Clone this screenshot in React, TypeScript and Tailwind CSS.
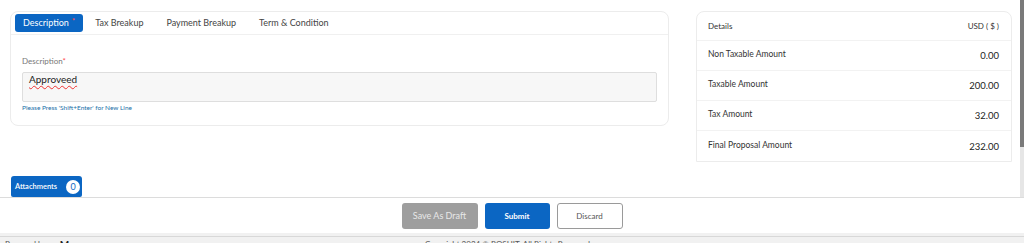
import { useState } from "react";

const tabs = ["Description", "Tax Breakup", "Payment Breakup", "Term & Condition"];

const rows = [
  { label: "Non Taxable Amount", value: "0.00" },
  { label: "Taxable Amount", value: "200.00" },
  { label: "Tax Amount", value: "32.00" },
  { label: "Final Proposal Amount", value: "232.00" },
];

function App() {
  const [active, setActive] = useState(0);
  const [desc, setDesc] = useState("Approveed");

  return (
    <div className="w-[1024px] h-[243px] overflow-hidden bg-white flex flex-col font-['Lato',sans-serif] text-[#333]">
      {/* Scrolling content */}
      <div className="flex h-[197px] shrink-0">
        <div className="flex-1 flex flex-col pl-[10px] pt-[11px]">
          <div className="flex gap-[27px]">
            {/* Tabs card */}
            <div className="w-[659px] h-[115px] border border-[#ececec] rounded-[8px] flex flex-col">
              <div className="h-[23px] border-b border-[#f0f0f0] flex items-center pl-[4px] gap-[1px]">
                {tabs.map((t, i) => (
                  <button
                    key={t}
                    onClick={() => setActive(i)}
                    className={
                      i === active
                        ? "h-[18px] px-[8px] rounded-[3px] bg-[#0b66c3] text-white text-[9px] flex items-center"
                        : "h-[18px] px-[11px] text-[9px] text-[#444] flex items-center"
                    }
                  >
                    {t}
                    {i === 0 && <span className="text-[#ff4d4d] text-[8px] ml-[3px] -mt-[4px]">*</span>}
                  </button>
                ))}
              </div>
              <div className="px-[11px] pt-[21px]">
                <div className="text-[8px] text-[#777] leading-[10px]">
                  Description<span className="text-[#ff4d4d]">*</span>
                </div>
                <textarea
                  value={desc}
                  onChange={(e) => setDesc(e.target.value)}
                  className="mt-[6px] w-[635px] h-[30px] block resize-none bg-[#f7f7f7] border border-[#dedede] rounded-[2px] px-[6px] pt-0 text-[10px] text-[#222] leading-[12px] outline-none underline decoration-wavy decoration-[#e33] underline-offset-2 decoration-[0.5px]"
                />
                <div className="mt-[2px] text-[6.5px] text-[#1a6fa8] leading-[8px]">
                  Please Press 'Shift+Enter' for New Line
                </div>
              </div>
            </div>

            {/* Details card */}
            <div className="w-[316px] border border-[#ececec] rounded-t-[8px] self-start">
              <div className="h-[29px] flex items-center justify-between pl-[11px] pr-[12px] border-b border-[#f2f2f2] text-[8px] text-[#333]">
                <span>Details</span>
                <span>USD ( $ )</span>
              </div>
              {rows.map((r, i) => (
                <div
                  key={r.label}
                  className={
                    "h-[30px] flex items-center justify-between pl-[11px] pr-[12px] " +
                    (i < rows.length - 1 ? "border-b border-[#f2f2f2]" : "")
                  }
                >
                  <span className="text-[8.5px] text-[#333] -mt-[2px]">{r.label}</span>
                  <span className="text-[9.5px] text-[#222] mt-[2px]">{r.value}</span>
                </div>
              ))}
            </div>
          </div>

          <div className="mt-auto pl-[1px]">
            <button className="h-[21px] w-[71px] rounded-t-[3px] rounded-b-[2px] bg-[#0b66c3] text-white text-[7.5px] font-semibold flex items-center justify-between pl-[4px] pr-[2px]">
              <span>Attachments</span>
              <span className="w-[14px] h-[14px] rounded-full bg-white text-[#0b66c3] text-[9px] font-normal flex items-center justify-center">
                0
              </span>
            </button>
          </div>
        </div>

        {/* scrollbar */}
        <div className="w-[4px] bg-[#e6e6e6] flex flex-col">
          <div className="h-[147px] bg-[#7a7a7a]" />
        </div>
      </div>

      {/* Action footer */}
      <div className="h-[36px] shrink-0 border-t border-[#dcdcdc] flex items-start justify-center gap-[7px] pt-[5px]">
        <button className="h-[26px] w-[76px] rounded-[3px] bg-[#9e9e9e] text-[#e8e8e8] text-[9px]">
          Save As Draft
        </button>
        <button className="h-[26px] w-[65px] rounded-[3px] bg-[#0b66c3] text-white text-[8px] font-bold">
          Submit
        </button>
        <button className="h-[26px] w-[66px] rounded-[3px] bg-white border border-[#9a9a9a] text-[#555] text-[8px]">
          Discard
        </button>
      </div>

      {/* Page footer */}
      <div className="flex-1 bg-[#f1f1f1] pt-[3px]">
        <div className="border-t border-[#d8d8d8] flex items-start px-[5px] pt-[2px] text-[8px] text-[#555] leading-[10px]">
          <div className="flex items-center gap-[6px] w-[420px]">
            <span>Powered by</span>
            <span className="font-bold text-[#222] text-[10px]">ↄ M</span>
          </div>
          <span>Copyright 2024 © ROSHIT, All Rights Reserved</span>
        </div>
      </div>
    </div>
  );
}

export default App;
